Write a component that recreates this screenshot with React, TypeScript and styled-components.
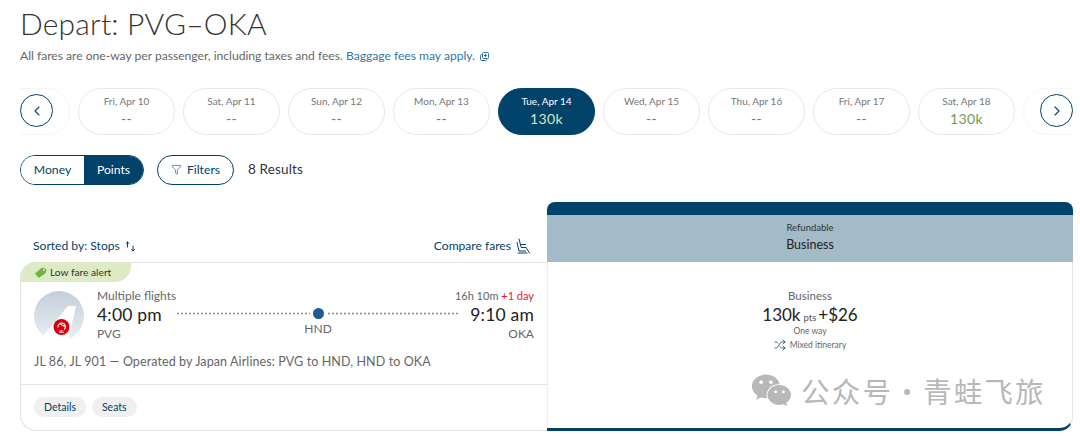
import React from "react";
import styled, { createGlobalStyle } from "styled-components";
import { ChevronLeft, ChevronRight, Filter, Shuffle } from "lucide-react";
import { FaWeixin } from "react-icons/fa";

const NAVY = "#01426a";
const FONT = `Lato, "Open Sans", Arial, sans-serif`;

const Global = createGlobalStyle`
  html, body { margin: 0; padding: 0; background: #fff; }
  body { width: 1080px; height: 436px; overflow: hidden; font-family: ${FONT}; color: #2e2e2e; }
`;

const Page = styled.div`
  position: relative;
  width: 1080px;
  height: 436px;
  padding: 4px 7px 0 20px;
  box-sizing: border-box;
  overflow: hidden;
`;
const Title = styled.h1`
  margin: 0;
  font-size: 30px;
  line-height: 38px;
  font-weight: 300;
  letter-spacing: 0.2px;
  color: #333;
`;
const Subtitle = styled.p`
  margin: 5px 0 0;
  height: 18px;
  font-size: 12.1px;
  line-height: 18px;
  color: #666;
  white-space: pre;
`;
const Link = styled.span`
  color: #2d77ad;
`;
const ExternalWrap = styled.span`
  margin-left: 5px;
  display: inline-block;
  vertical-align: -1px;
`;
const Carousel = styled.div`
  position: relative;
  margin-top: 23px;
  height: 47px;
  overflow: hidden;
`;
const Track = styled.div`
  display: flex;
  gap: 8px;
  margin-left: -47px;
`;
const Pill = styled.div<{ $active?: boolean; $faded?: boolean }>`
  flex: 0 0 97px;
  height: 47px;
  box-sizing: border-box;
  border-radius: 24px;
  border: 1px solid ${(p) => (p.$active ? NAVY : p.$faded ? "#f5f5f5" : "#e8e8e8")};
  background: ${(p) => (p.$active ? NAVY : "#fff")};
  display: flex;
  flex-direction: column;
  align-items: center;
  padding-top: 5px;
`;
const PillDate = styled.span<{ $active?: boolean }>`
  font-size: 10px;
  line-height: 15px;
  color: ${(p) => (p.$active ? "#fff" : "#777")};
`;
const PillPrice = styled.span<{ $tone: "none" | "active" | "green" }>`
  font-size: 14px;
  line-height: 20px;
  letter-spacing: 0.4px;
  color: ${(p) => (p.$tone === "active" ? "#d5e8c0" : p.$tone === "green" ? "#6f9e4b" : "#777")};
`;
const Arrow = styled.div<{ $side: "left" | "right" }>`
  position: absolute;
  top: 6px;
  ${(p) => (p.$side === "left" ? "left: 0;" : "right: 0;")}
  width: 33px;
  height: 33px;
  box-sizing: border-box;
  border-radius: 50%;
  border: 1px solid ${NAVY};
  background: #fff;
  color: ${NAVY};
  display: flex;
  align-items: center;
  justify-content: center;
`;
const Controls = styled.div`
  display: flex;
  align-items: center;
  margin-top: 20px;
  height: 30px;
`;
const Toggle = styled.div`
  display: flex;
  width: 124px;
  height: 30px;
  box-sizing: border-box;
  border: 1px solid ${NAVY};
  border-radius: 15px;
  overflow: hidden;
`;
const ToggleItem = styled.div<{ $on?: boolean }>`
  flex: ${(p) => (p.$on ? "0 0 59px" : "1")};
  display: flex;
  align-items: center;
  justify-content: center;
  padding-bottom: 2px;
  font-size: 12.2px;
  background: ${(p) => (p.$on ? NAVY : "#fff")};
  color: ${(p) => (p.$on ? "#fff" : NAVY)};
`;
const FilterButton = styled.div`
  margin-left: 13px;
  width: 77px;
  height: 30px;
  box-sizing: border-box;
  border: 1px solid ${NAVY};
  border-radius: 15px;
  padding-bottom: 2px;
  display: flex;
  align-items: center;
  justify-content: center;
  gap: 5px;
  font-size: 12.2px;
  color: ${NAVY};
`;
const Results = styled.span`
  margin: -2px 0 0 14px;
  font-size: 13.5px;
  color: #333;
  letter-spacing: 0.15px;
`;
const Columns = styled.div`
  display: grid;
  grid-template-columns: 527px 526px;
  margin-top: 17px;
  height: 229px;
`;
const Left = styled.div`
  display: flex;
  flex-direction: column;
`;
const SortRow = styled.div`
  height: 60px;
  box-sizing: border-box;
  padding: 36px 15px 8px 13px;
  display: flex;
  justify-content: space-between;
  align-items: center;
  font-size: 12.1px;
  line-height: 16px;
  color: ${NAVY};
`;
const SortGroup = styled.span`
  display: flex;
  align-items: center;
  gap: 5px;
`;
const FlightCard = styled.div`
  position: relative;
  flex: 1;
  box-sizing: border-box;
  border: 1px solid #e4e4e4;
  border-right: none;
  border-radius: 16px 0 0 16px;
  display: flex;
  flex-direction: column;
`;
const Badge = styled.div`
  position: absolute;
  top: -1px;
  left: -1px;
  width: 111px;
  height: 20px;
  box-sizing: border-box;
  background: #dcebc6;
  border-radius: 16px 0 16px 0;
  padding-left: 15px;
  display: flex;
  align-items: center;
  gap: 3px;
  font-size: 10.2px;
  color: #333;
`;
const CardMain = styled.div`
  height: 122px;
  box-sizing: border-box;
  padding: 28px 13px 0 13px;
  border-bottom: 1px solid #e4e4e4;
`;
const FlightRow = styled.div`
  display: flex;
  height: 51px;
`;
const Logo = styled.div`
  width: 50px;
  height: 50px;
  flex: 0 0 50px;
  margin-right: 13px;
`;
const TimeBlock = styled.div<{ $right?: boolean }>`
  display: flex;
  flex-direction: column;
  align-items: ${(p) => (p.$right ? "flex-end" : "flex-start")};
  flex: 0 0 auto;
  margin-top: -3px;
  font-size: 12px;
  line-height: 15px;
  color: #666;
`;
const TimeValue = styled.span`
  font-size: 17.5px;
  line-height: 23px;
  color: #222;
  letter-spacing: 0.2px;
`;
const Duration = styled.span`
  font-size: 11px;
  white-space: pre;
`;
const Red = styled.span`
  color: #e31837;
`;
const Route = styled.div`
  flex: 1;
  margin: 0 -5px 0 0;
  display: flex;
  flex-direction: column;
  align-items: center;
  padding-top: 17px;
`;
const RouteLine = styled.div`
  width: 100%;
  display: flex;
  align-items: center;
  gap: 3px;
`;
const Dots = styled.div`
  flex: 1;
  height: 3px;
  background-image: radial-gradient(circle, #8f8f8f 0.9px, transparent 1.2px);
  background-size: 4px 3px;
`;
const Stop = styled.div`
  width: 11px;
  height: 11px;
  border-radius: 50%;
  background: #1f5a92;
`;
const StopLabel = styled.span`
  margin-top: 2px;
  font-size: 12px;
  line-height: 15px;
  color: #666;
`;
const Operated = styled.div`
  margin-top: 12px;
  font-size: 12.5px;
  line-height: 16px;
  color: #666;
  letter-spacing: 0.1px;
`;
const CardFoot = styled.div`
  display: flex;
  gap: 6px;
  padding: 12px 13px 0;
`;
const Chip = styled.div`
  height: 20px;
  padding: 0 10px;
  border-radius: 10px;
  background: #f0f0f0;
  display: flex;
  align-items: center;
  font-size: 10.5px;
  color: ${NAVY};
`;
const FarePanel = styled.div`
  border-radius: 8px 8px 14px 0;
  border-bottom: 3px solid ${NAVY};
  border-right: 1px solid #e8e8e8;
  display: flex;
  flex-direction: column;
`;
const PanelCap = styled.div`
  height: 13px;
  margin-right: -1px;
  border-radius: 8px 8px 0 0;
  background: ${NAVY};
`;
const PanelHead = styled.div`
  height: 47px;
  margin-right: -1px;
  background: #a3bac8;
  display: flex;
  flex-direction: column;
  align-items: center;
  padding-top: 6px;
  box-sizing: border-box;
`;
const HeadSmall = styled.span`
  font-size: 9.5px;
  line-height: 14px;
  color: #333;
`;
const HeadLarge = styled.span`
  margin-top: 2px;
  font-size: 12.5px;
  line-height: 16px;
  color: #222;
`;
const PanelBody = styled.div`
  flex: 1;
  border-left: 1px solid #eee;
  display: flex;
  flex-direction: column;
  align-items: center;
  padding-top: 27px;
`;
const FareClass = styled.span`
  font-size: 11.5px;
  line-height: 14px;
  color: #666;
`;
const FarePrice = styled.div`
  margin-top: 1px;
  display: flex;
  align-items: baseline;
  font-size: 17px;
  line-height: 22px;
  color: #222;
`;
const Pts = styled.span`
  font-size: 9.5px;
  margin: 0 2px 0 3px;
  color: #555;
`;
const OneWay = styled.span`
  margin-top: -4px;
  font-size: 8.5px;
  line-height: 12px;
  color: #666;
`;
const Mixed = styled.span`
  margin-top: 1px;
  display: flex;
  align-items: center;
  gap: 4px;
  font-size: 8.5px;
  line-height: 14px;
  color: #666;
`;
const Watermark = styled.div`
  position: absolute;
  left: 751px;
  top: 370px;
  display: flex;
  align-items: center;
  gap: 9px;
  color: #b8b8b8;
  font-family: "Noto Sans CJK SC", sans-serif;
  font-size: 28.5px;
  line-height: 40px;
  letter-spacing: 2.2px;
  word-spacing: -9px;
  white-space: pre;
`;

const days = [
  { d: "", p: "", faded: true },
  { d: "Fri, Apr 10", p: "--" },
  { d: "Sat, Apr 11", p: "--" },
  { d: "Sun, Apr 12", p: "--" },
  { d: "Mon, Apr 13", p: "--" },
  { d: "Tue, Apr 14", p: "130k", active: true },
  { d: "Wed, Apr 15", p: "--" },
  { d: "Thu, Apr 16", p: "--" },
  { d: "Fri, Apr 17", p: "--" },
  { d: "Sat, Apr 18", p: "130k", green: true },
  { d: "", p: "", faded: true },
];

const JalLogo = () => (
  <svg width="50" height="50" viewBox="0 0 50 50">
    <defs>
      <linearGradient id="jalsky" x1="0" y1="0" x2="0" y2="1">
        <stop offset="0" stopColor="#c3ced8" />
        <stop offset="1" stopColor="#eaf0f5" />
      </linearGradient>
      <clipPath id="jalclip">
        <circle cx="25" cy="25" r="25" />
      </clipPath>
    </defs>
    <circle cx="25" cy="25" r="25" fill="url(#jalsky)" />
    <path d="M34 15 H42 L34 50 H5 Z" fill="#fff" clipPath="url(#jalclip)" />
    <circle cx="27.5" cy="36" r="8" fill="#d7000f" />
    <path d="M24 36 a3.7 3.7 0 1 1 6.5 2.2 M27 33.6 l3.4 1.6" stroke="#fff" strokeWidth="1.1" fill="none" strokeLinecap="round" />
    <text x="27.5" y="42" fontSize="3" fontWeight="700" fill="#fff" textAnchor="middle">JAL</text>
  </svg>
);

const SeatIcon = () => (
  <svg width="16" height="16" viewBox="0 0 16 16" fill="none" stroke={NAVY} strokeWidth="1" strokeLinecap="round" strokeLinejoin="round">
    <path d="M3 1 L5.2 9.5 H10 L13.5 15" />
    <path d="M1 4.5 L3 13 H9.5" />
    <path d="M5 6.5 H9.5" />
    <path d="M2 15 H11" />
  </svg>
);

const SortIcon = () => (
  <svg width="11" height="11" viewBox="0 0 11 11" fill="none" stroke={NAVY} strokeWidth="1" strokeLinecap="round" strokeLinejoin="round">
    <path d="M2.5 6 V1 M1 2.5 L2.5 1 L4 2.5" />
    <path d="M8 5 V10 M6.5 8.5 L8 10 L9.5 8.5" />
  </svg>
);

const TagIcon = () => (
  <svg width="12" height="11" viewBox="0 0 12 11">
    <path d="M0.5 6 L6.5 1 Q7.2 .5 8 .8 L11 2 Q11.6 2.3 11.4 3 L10.8 5.5 Q10.6 6.2 10 6.6 L4.5 10.5 Q4 10.8 3.5 10.5 L.7 7.4 Q.2 6.7 .5 6 Z" fill="#76b043" />
    <circle cx="8.8" cy="3" r="1" fill="#dcebc6" />
  </svg>
);

const ExternalIcon = () => (
  <svg width="9" height="9" viewBox="0 0 9 9" fill="none" stroke="#2d77ad" strokeWidth="1">
    <rect x="2.5" y="0.5" width="6" height="6" rx="1" />
    <path d="M2.5 2.5 H1.5 a1 1 0 0 0 -1 1 V7.5 a1 1 0 0 0 1 1 H5.5 a1 1 0 0 0 1 -1 V6.5" />
    <path d="M5.5 2 V5 M4 3.5 H7" />
  </svg>
);

export default function App() {
  return (
    <Page>
      <Global />
      <Title>Depart: PVG–OKA</Title>
      <Subtitle>
        All fares are one-way per passenger, including taxes and fees. <Link>Baggage fees may apply.</Link>
        <ExternalWrap>
          <ExternalIcon />
        </ExternalWrap>
      </Subtitle>
      <Carousel>
        <Track>
          {days.map((x, i) => (
            <Pill key={i} $active={x.active} $faded={x.faded}>
              <PillDate $active={x.active}>{x.d}</PillDate>
              <PillPrice $tone={x.active ? "active" : x.green ? "green" : "none"}>{x.p}</PillPrice>
            </Pill>
          ))}
        </Track>
        <Arrow $side="left">
          <ChevronLeft size={16} strokeWidth={1.6} />
        </Arrow>
        <Arrow $side="right">
          <ChevronRight size={16} strokeWidth={1.6} />
        </Arrow>
      </Carousel>
      <Controls>
        <Toggle>
          <ToggleItem>Money</ToggleItem>
          <ToggleItem $on>Points</ToggleItem>
        </Toggle>
        <FilterButton>
          <Filter size={11} strokeWidth={1.3} />
          Filters
        </FilterButton>
        <Results>8 Results</Results>
      </Controls>
      <Columns>
        <Left>
          <SortRow>
            <SortGroup>
              Sorted by: Stops <SortIcon />
            </SortGroup>
            <SortGroup>
              Compare fares <SeatIcon />
            </SortGroup>
          </SortRow>
          <FlightCard>
            <Badge>
              <TagIcon />
              Low fare alert
            </Badge>
            <CardMain>
              <FlightRow>
                <Logo>
                  <JalLogo />
                </Logo>
                <TimeBlock>
                  <span>Multiple flights</span>
                  <TimeValue>4:00 pm</TimeValue>
                  <span>PVG</span>
                </TimeBlock>
                <Route>
                  <RouteLine>
                    <Dots />
                    <Stop />
                    <Dots />
                  </RouteLine>
                  <StopLabel>HND</StopLabel>
                </Route>
                <TimeBlock $right>
                  <Duration>
                    16h 10m <Red>+1 day</Red>
                  </Duration>
                  <TimeValue>9:10 am</TimeValue>
                  <span>OKA</span>
                </TimeBlock>
              </FlightRow>
              <Operated>JL 86, JL 901 — Operated by Japan Airlines: PVG to HND, HND to OKA</Operated>
            </CardMain>
            <CardFoot>
              <Chip>Details</Chip>
              <Chip>Seats</Chip>
            </CardFoot>
          </FlightCard>
        </Left>
        <FarePanel>
          <PanelCap />
          <PanelHead>
            <HeadSmall>Refundable</HeadSmall>
            <HeadLarge>Business</HeadLarge>
          </PanelHead>
          <PanelBody>
            <FareClass>Business</FareClass>
            <FarePrice>
              130k<Pts>pts</Pts>+$26
            </FarePrice>
            <OneWay>One way</OneWay>
            <Mixed>
              <Shuffle size={12} color={NAVY} strokeWidth={1.5} />
              Mixed itinerary
            </Mixed>
          </PanelBody>
        </FarePanel>
      </Columns>
      <Watermark>
        <FaWeixin size={41} />
        公众号 · 青蛙飞旅
      </Watermark>
    </Page>
  );
}
